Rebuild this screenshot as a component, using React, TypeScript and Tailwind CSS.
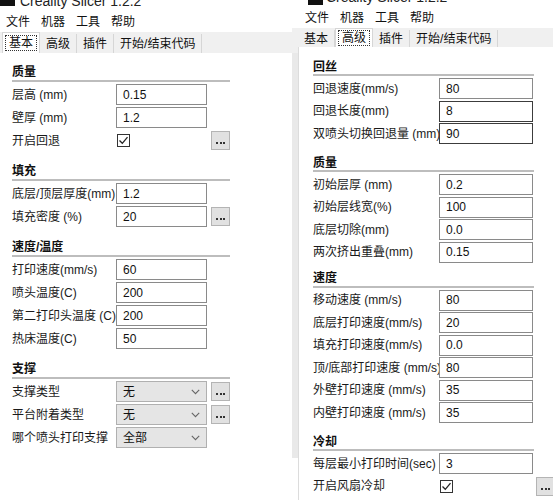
import React from 'react';

type Row = { label: string; v?: string; check?: boolean; sel?: string; btn?: boolean; dark?: boolean };
type Sec = { title: string; rows: Row[] };

const LEFT: Sec[] = [
  { title: '质量', rows: [{ label: '层高 (mm)', v: '0.15' }, { label: '壁厚 (mm)', v: '1.2' }, { label: '开启回退', check: true, btn: true }] },
  { title: '填充', rows: [{ label: '底层/顶层厚度(mm)', v: '1.2' }, { label: '填充密度 (%)', v: '20', btn: true }] },
  { title: '速度/温度', rows: [{ label: '打印速度(mm/s)', v: '60' }, { label: '喷头温度(C)', v: '200' }, { label: '第二打印头温度 (C)', v: '200' }, { label: '热床温度(C)', v: '50' }] },
  { title: '支撑', rows: [{ label: '支撑类型', sel: '无', btn: true }, { label: '平台附着类型', sel: '无', btn: true }, { label: '哪个喷头打印支撑', sel: '全部' }] },
];

const RIGHT: Sec[] = [
  { title: '回丝', rows: [{ label: '回退速度(mm/s)', v: '80' }, { label: '回退长度(mm)', v: '8', dark: true }, { label: '双喷头切换回退量 (mm)', v: '90', dark: true }] },
  { title: '质量', rows: [{ label: '初始层厚 (mm)', v: '0.2' }, { label: '初始层线宽(%)', v: '100' }, { label: '底层切除(mm)', v: '0.0' }, { label: '两次挤出重叠(mm)', v: '0.15' }] },
  { title: '速度', rows: [{ label: '移动速度 (mm/s)', v: '80' }, { label: '底层打印速度(mm/s)', v: '20' }, { label: '填充打印速度(mm/s)', v: '0.0' }, { label: '顶/底部打印速度 (mm/s)', v: '80' }, { label: '外壁打印速度 (mm/s)', v: '35' }, { label: '内壁打印速度 (mm/s)', v: '35' }] },
  { title: '冷却', rows: [{ label: '每层最小打印时间(sec)', v: '3' }, { label: '开启风扇冷却', check: true, btn: true }] },
];

function Dots() {
  return (
    <div className="w-[19px] h-[19px] shrink-0 bg-[#e1e1e1] border border-[#b4b4b4] flex items-end justify-center pb-[5px]">
      <div className="flex gap-[1.5px]">
        <div className="w-[2px] h-[2px] bg-[#333]" />
        <div className="w-[2px] h-[2px] bg-[#333]" />
        <div className="w-[2px] h-[2px] bg-[#333]" />
      </div>
    </div>
  );
}

function Check() {
  return (
    <div className="w-[13px] h-[13px] border border-[#333] bg-white flex items-center justify-center">
      <svg width="11" height="11" viewBox="0 0 11 11">
        <polyline points="1.5,5.5 4.3,8.3 9.5,2.2" fill="none" stroke="#222" strokeWidth="1.3" />
      </svg>
    </div>
  );
}

function Chevron() {
  return (
    <svg width="9" height="6" viewBox="0 0 9 6">
      <polyline points="0.8,0.8 4.5,4.6 8.2,0.8" fill="none" stroke="#666" strokeWidth="1.1" />
    </svg>
  );
}

type Cfg = {
  labelW: string;
  inputW: string;
  rowH: string;
  gap: string;
  headW: string;
  headH: string;
  btnMl: string;
  mts: string[];
};

function Section({ sec, cfg, mt }: { sec: Sec; cfg: Cfg; mt: string }) {
  return (
    <div className={mt}>
      <div className={`${cfg.headW} flex flex-col`}>
        <div className={`${cfg.headH} text-[12px] font-bold text-[#111] flex items-center`}>{sec.title}</div>
        <div className="h-[2px] bg-[#bdbdbd]" />
      </div>
      <div className={`flex flex-col mt-[2px] ${cfg.gap}`}>
        {sec.rows.map((r, i) => (
          <div key={i} className={`flex items-center ${cfg.rowH}`}>
            <div className={`${cfg.labelW} shrink-0 text-[12px] text-[#1a1a1a] whitespace-nowrap`}>{r.label}</div>
            {r.v !== undefined && (
              <div
                className={`${cfg.inputW} h-full shrink-0 bg-white border ${r.dark ? 'border-[#3c3c3c]' : 'border-[#8a8a8a]'} pl-[6px] flex items-center text-[12px] text-[#111]`}
              >
                {r.v}
              </div>
            )}
            {r.check && (
              <div className={`${cfg.inputW} h-full shrink-0 flex items-center pl-[1px]`}>
                <Check />
              </div>
            )}
            {r.sel !== undefined && (
              <div className={`${cfg.inputW} h-full shrink-0 bg-[#e5e5e5] border border-[#b0b0b0] pl-[6px] pr-[6px] flex items-center justify-between text-[12px] text-[#111]`}>
                <span>{r.sel}</span>
                <Chevron />
              </div>
            )}
            {r.btn && (
              <div className={cfg.btnMl}>
                <Dots />
              </div>
            )}
          </div>
        ))}
      </div>
    </div>
  );
}

function Tabs({ active, h, selH, left }: { active: number; h: string; selH: string; left: string }) {
  const names = ['基本', '高级', '插件', '开始/结束代码'];
  return (
    <div className={`${h} bg-[#f0f0f0] flex items-end ${left}`}>
      {names.map((n, i) =>
        i === active ? (
          <div key={n} className={`${selH} px-[2px] bg-white border border-b-0 border-[#d6d6d6] flex items-center`}>
            <span className="border border-dotted border-[#333] px-[3px] leading-[14px] text-[12px] text-[#111]">{n}</span>
          </div>
        ) : (
          <div key={n} className="h-[calc(100%-2px)] px-[6px] border-r border-[#d6d6d6] flex items-center text-[12px] text-[#111]">
            {n}
          </div>
        )
      )}
    </div>
  );
}

const LCFG: Cfg = {
  labelW: 'w-[104px]',
  inputW: 'w-[91px]',
  rowH: 'h-[21px]',
  gap: 'gap-[2px]',
  headW: 'w-[218px]',
  headH: 'h-[16px]',
  btnMl: 'ml-[4px]',
  mts: ['', 'mt-[12px]', 'mt-[12px]', 'mt-[12px]'],
};

const RCFG: Cfg = {
  labelW: 'w-[126px]',
  inputW: 'w-[94px]',
  rowH: 'h-[21px]',
  gap: 'gap-[1.5px]',
  headW: 'w-[221px]',
  headH: 'h-[15px]',
  btnMl: 'ml-[3px]',
  mts: ['', 'mt-[11px]', 'mt-[8px]', 'mt-[11px]'],
};

function Menu({ cls }: { cls: string }) {
  return (
    <div className={`${cls} flex items-center gap-[11px] text-[12px] text-[#111] bg-white`}>
      <span>文件</span>
      <span>机器</span>
      <span>工具</span>
      <span>帮助</span>
    </div>
  );
}

export default function App() {
  return (
    <div className="w-[553px] h-[500px] overflow-hidden bg-white flex font-['Liberation_Sans','Noto_Sans_CJK_SC',sans-serif]">
      {/* left window */}
      <div className="w-[292px] shrink-0 flex flex-col">
        <div className="h-[10px] overflow-hidden flex items-start">
          <div className="w-[15px] h-[6px] bg-[#111] shrink-0" />
          <div className="ml-[5px] mt-[-7px] text-[14px] leading-[16px] text-[#222] whitespace-nowrap">Creality Slicer 1.2.2</div>
        </div>
        <Menu cls="h-[22px] pl-[6px] pt-[2px]" />
        <Tabs active={0} h="h-[21px]" selH="h-[21px]" left="pl-[2px]" />
        <div className="flex-1 bg-white pt-[11px] pl-[12px]">
          {LEFT.map((s, i) => (
            <Section key={i} sec={s} cfg={LCFG} mt={LCFG.mts[i]} />
          ))}
        </div>
      </div>
      {/* divider strip */}
      <div className="w-[6px] shrink-0 flex flex-col">
        <div className="h-[28px] bg-white" />
        <div className="h-[25px] bg-[#f0f0f0]" />
        <div className="h-[405px] bg-[#e9e9e9]" />
      </div>
      {/* right window */}
      <div className="flex-1 min-w-0 overflow-hidden flex flex-col">
        <div className="h-[6px] overflow-hidden flex items-start">
          <div className="ml-[10px] w-[15px] h-[5px] bg-[#111] shrink-0" />
          <div className="ml-[3px] mt-[-11px] text-[14px] leading-[16px] text-[#222] whitespace-nowrap">Creality Slicer 1.2.2</div>
        </div>
        <Menu cls="h-[22px] pl-[7px] pt-[1px]" />
        <Tabs active={1} h="h-[19px]" selH="h-[19px]" left="pl-[0px]" />
        <div className="flex-1 bg-white pt-[12px] pl-[14px] border-l border-[#dcdcdc]">
          {RIGHT.map((s, i) => (
            <Section key={i} sec={s} cfg={RCFG} mt={RCFG.mts[i]} />
          ))}
        </div>
      </div>
    </div>
  );
}
